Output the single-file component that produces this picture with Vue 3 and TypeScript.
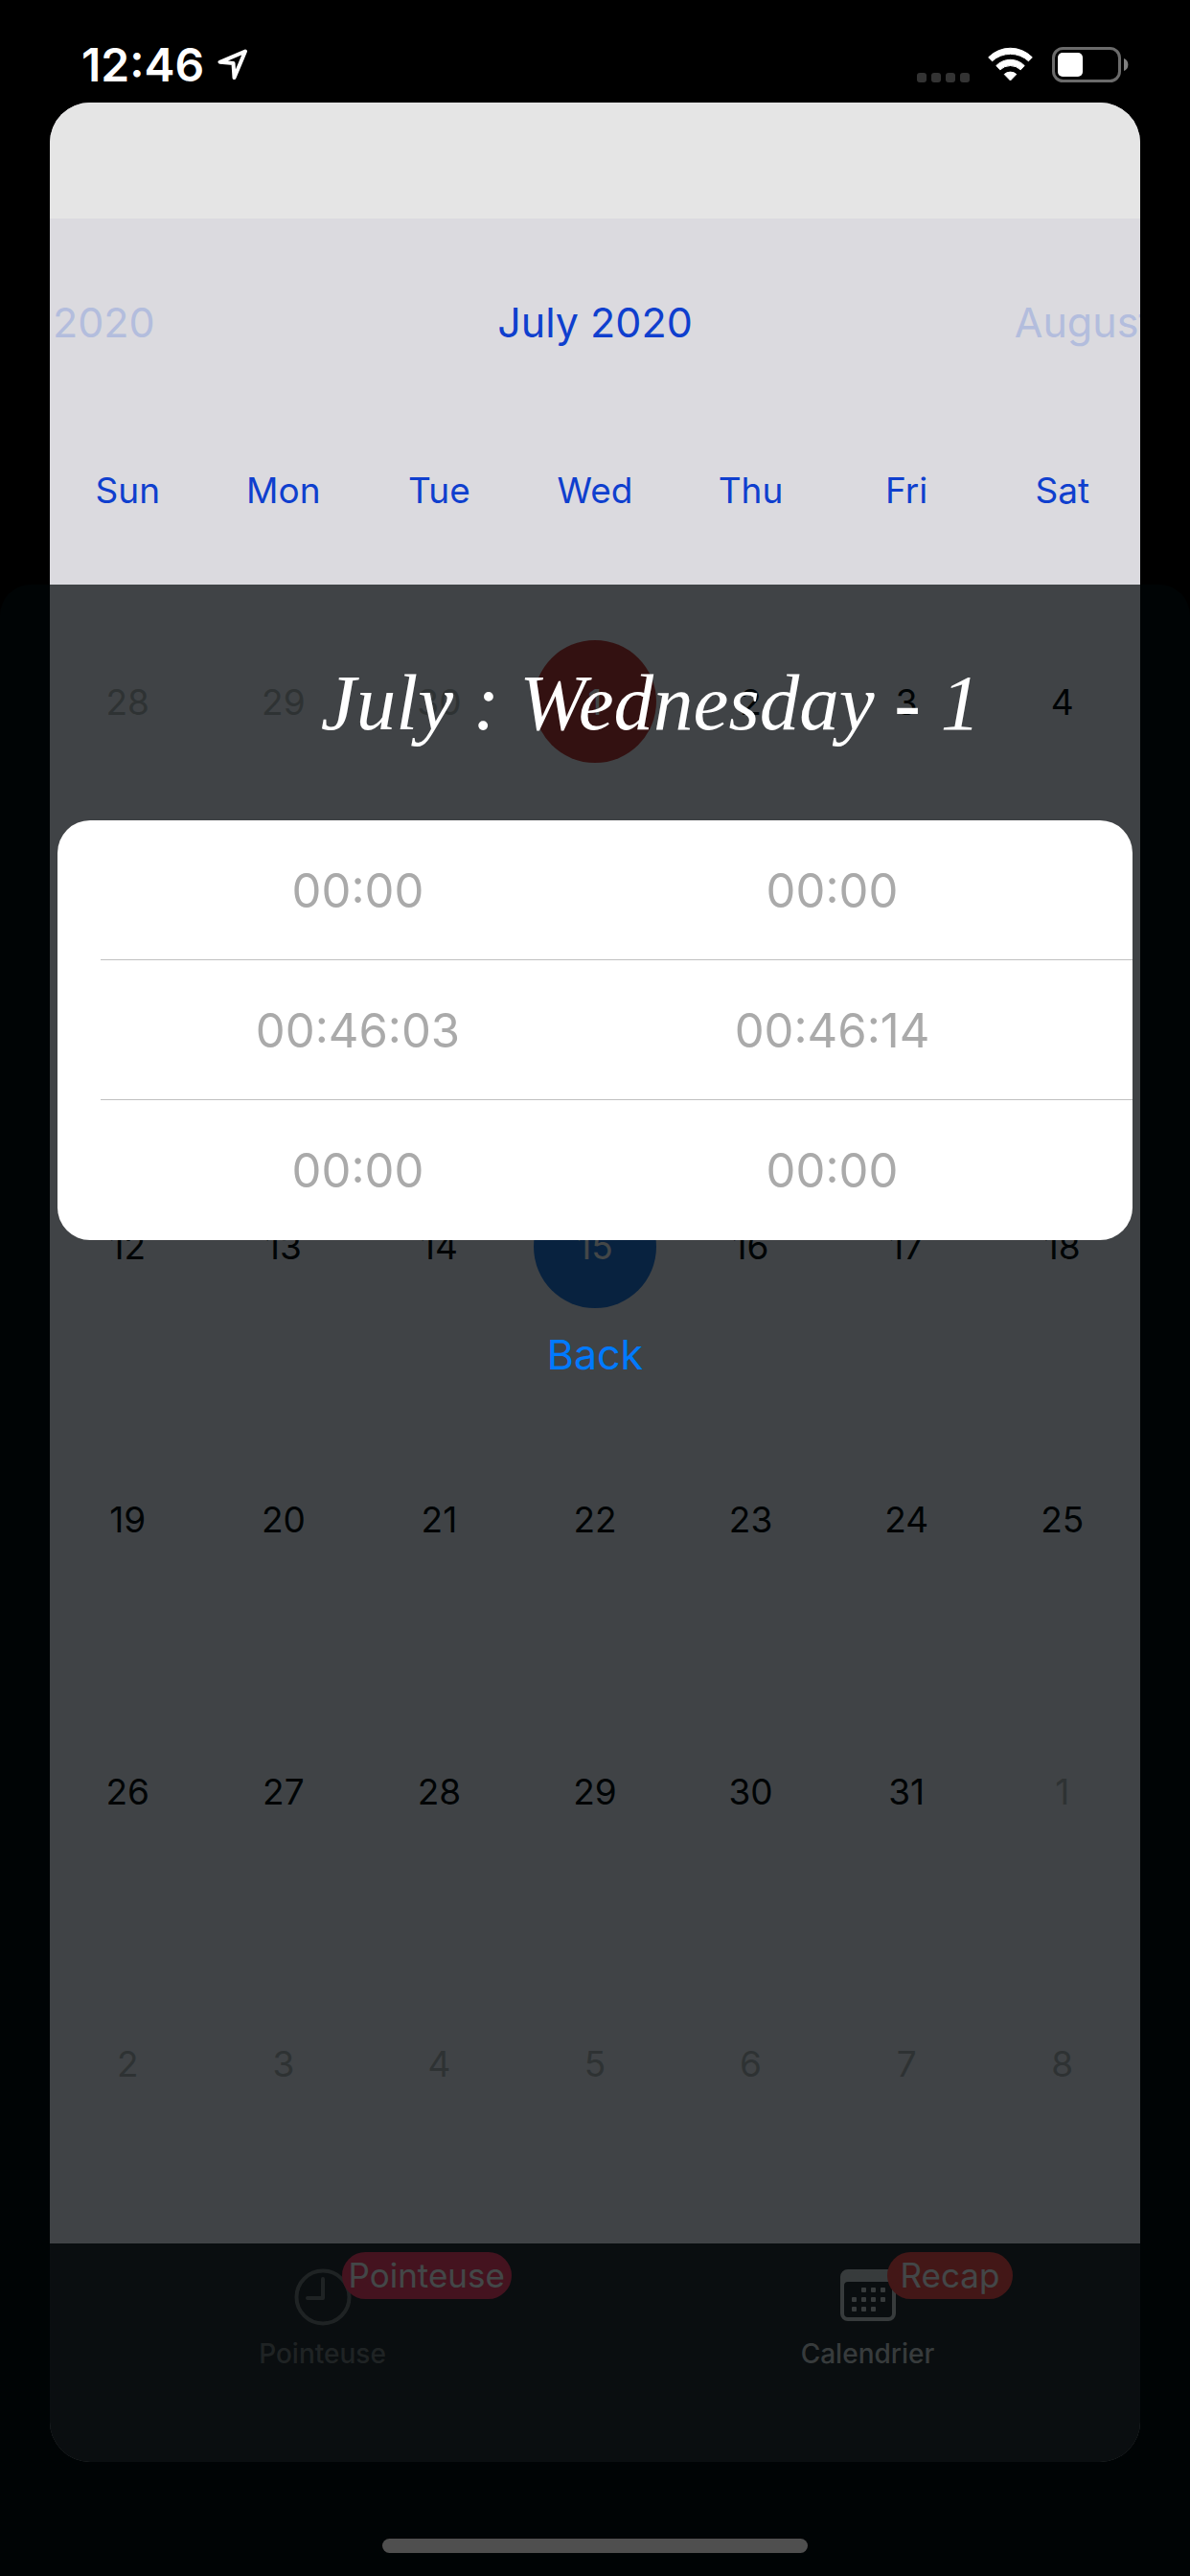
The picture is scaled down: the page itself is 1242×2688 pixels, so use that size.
<script setup lang="ts">
interface Day {
  label: number
  outside?: boolean
  mark?: 'selected' | 'today'
}

interface Tab {
  label: string
  badge: string
  icon: 'clock' | 'calendar'
  active: boolean
}

const months: string[] = ['June 2020', 'July 2020', 'August 2020']
const weekdays: string[] = ['Sun', 'Mon', 'Tue', 'Wed', 'Thu', 'Fri', 'Sat']

const FIRST_OFFSET = 3
const DAYS_BEFORE = 30
const DAYS_IN_MONTH = 31

const weeks: Day[][] = Array.from({ length: 6 }, (_, w) =>
  Array.from({ length: 7 }, (_, d): Day => {
    const n = w * 7 + d - FIRST_OFFSET + 1
    if (n < 1) return { label: DAYS_BEFORE + n, outside: true }
    if (n > DAYS_IN_MONTH) return { label: n - DAYS_IN_MONTH, outside: true }
    return { label: n, mark: n === 1 ? 'selected' : n === 15 ? 'today' : undefined }
  }),
)

const records: [string, string][] = [
  ['00:00', '00:00'],
  ['00:46:03', '00:46:14'],
  ['00:00', '00:00'],
]

const tabs: Tab[] = [
  { label: 'Pointeuse', badge: 'Pointeuse', icon: 'clock', active: false },
  { label: 'Calendrier', badge: 'Recap', icon: 'calendar', active: true },
]

const dots: [number, number][] = [
  [24, 22], [34, 22], [44, 22],
  [14, 32], [24, 32], [34, 32], [44, 32],
  [14, 42], [24, 42], [34, 42],
]
</script>

<template>
  <div class="screen">
    <header class="status">
      <div class="now">
        <time>12:46</time>
        <svg width="32" height="34" viewBox="0 0 32 34" aria-hidden="true">
          <path d="M29 2.5 L2.5 13.8 L16.5 15 L17.5 30 Z" fill="none" stroke="#fff" stroke-width="4" stroke-linejoin="round" />
        </svg>
      </div>
      <div class="signals">
        <svg width="55" height="10" viewBox="0 0 55 10" aria-hidden="true">
          <rect v-for="i in 4" :key="i" :x="(i - 1) * 15" y="0" width="10" height="10" rx="3" fill="#333" />
        </svg>
        <svg width="48" height="37" viewBox="0 0 48 37" fill="#fff" stroke="#fff" stroke-width="1" stroke-linejoin="round" aria-hidden="true">
          <path d="M.7 10.8 A32 32 0 0 1 46.3 10.8 L42.5 14.8 A28 28 0 0 0 4.5 14.8 Z" />
          <path d="M8.8 19.5 A20.5 20.5 0 0 1 38.2 19.5 L34.2 23.8 A15.5 15.5 0 0 0 12.8 23.8 Z" />
          <path d="M17.2 28.5 A9.5 9.5 0 0 1 29.8 28.5 L23.5 35 Z" />
        </svg>
        <svg width="80" height="37" viewBox="0 0 80 37" aria-hidden="true">
          <rect x="1.5" y="1.5" width="69" height="34" rx="10" fill="none" stroke="#6b6b6b" stroke-width="3" />
          <rect x="6" y="6" width="26" height="25" rx="5" fill="#fff" />
          <path d="M75 12 A7 7 0 0 1 75 25 Z" fill="#808080" />
        </svg>
      </div>
    </header>

    <main class="app">
      <div class="nav-space"></div>
      <div class="calendar">
        <div class="months">
          <button v-for="(m, i) in months" :key="m" type="button" class="month" :class="{ current: i === 1 }">{{ m }}</button>
        </div>
        <table class="grid">
          <thead>
            <tr>
              <th v-for="w in weekdays" :key="w" scope="col">{{ w }}</th>
            </tr>
          </thead>
          <tbody>
            <tr v-for="(week, wi) in weeks" :key="wi">
              <td v-for="(day, di) in week" :key="di">
                <button type="button" class="day" :class="[day.mark, { outside: day.outside }]">{{ day.label }}</button>
              </td>
            </tr>
          </tbody>
        </table>
      </div>

      <nav class="tabs">
        <a v-for="tab in tabs" :key="tab.label" href="#" class="tab" :class="{ active: tab.active }">
          <svg v-if="tab.icon === 'clock'" width="60" height="60" viewBox="0 0 60 60" fill="none" stroke="currentColor" stroke-linecap="round" stroke-linejoin="round" aria-hidden="true">
            <circle cx="30" cy="30" r="27.5" stroke-width="4" />
            <path d="M30 11 V31 H14" stroke-width="4" />
          </svg>
          <svg v-else width="60" height="60" viewBox="0 0 60 60" fill="currentColor" aria-hidden="true">
            <path fill-rule="evenodd" d="M9 1 H51 A8 8 0 0 1 59 9 V47 A8 8 0 0 1 51 55 H9 A8 8 0 0 1 1 47 V9 A8 8 0 0 1 9 1 Z M9 14 A4 4 0 0 0 5 18 V47 A4 4 0 0 0 9 51 H51 A4 4 0 0 0 55 47 V18 A4 4 0 0 0 51 14 Z" />
            <rect v-for="([x, y], i) in dots" :key="i" :x="x - 1" :y="y - 2" width="5" height="5" rx="1" />
          </svg>
          <span class="tab-label">{{ tab.label }}</span>
          <span class="badge" :class="{ recap: tab.active }">{{ tab.badge }}</span>
        </a>
      </nav>
    </main>

    <section class="sheet" aria-label="Day details">
      <h1 class="title">July : Wednesday - 1</h1>
      <ul class="records">
        <li v-for="([start, end], i) in records" :key="i">
          <div class="record">
            <span>{{ start }}</span>
            <span>{{ end }}</span>
          </div>
        </li>
      </ul>
      <button type="button" class="back">Back</button>
      <div class="home"></div>
    </section>
  </div>
</template>

<style>
html,
body {
  margin: 0;
  background: #000;
}
</style>

<style scoped>
* {
  box-sizing: border-box;
}

.screen {
  position: relative;
  display: flex;
  flex-direction: column;
  min-height: 100vh;
  overflow: hidden;
  font-family: Inter, "Liberation Sans", sans-serif;
  background: #000;
}

button {
  margin: 0;
  padding: 0;
  border: 0;
  background: none;
  font: inherit;
  color: inherit;
}

.status {
  display: flex;
  justify-content: space-between;
  align-items: flex-start;
  height: 107px;
  padding: 49px 64px 0 85px;
  color: #fff;
}

.now {
  display: flex;
  align-items: center;
  gap: 14px;
  height: 38px;
  font-size: 48px;
  font-weight: 600;
  line-height: 38px;
}

.signals {
  display: flex;
  align-items: flex-end;
  gap: 19px;
}

.app {
  flex: 1;
  display: flex;
  flex-direction: column;
  margin: 0 52px 119px;
  border-radius: 42px;
  overflow: hidden;
  background: #dbdadf;
}

.nav-space {
  height: 121px;
  background: #e5e5e5;
}

.calendar {
  flex: 1;
  display: flex;
  flex-direction: column;
  padding-bottom: 45px;
}

.months {
  display: flex;
  justify-content: center;
  height: 216px;
  overflow: hidden;
  font-size: 43px;
  color: #b3bddd;
}

.month {
  flex: 0 0 50%;
  text-align: center;
  white-space: nowrap;
}

.month.current {
  color: #0f3fce;
}

.grid {
  flex: 1;
  display: flex;
  flex-direction: column;
  gap: 10px;
  font-size: 37px;
}

.grid tr {
  display: grid;
  grid-template-columns: repeat(7, 1fr);
}

.grid th {
  padding: 0;
  font-weight: 400;
  line-height: 136px;
  color: #0f3fce;
}

.grid tbody {
  flex: 1;
  display: grid;
  grid-template-rows: repeat(6, minmax(140px, 1fr));
}

.grid td {
  display: flex;
  align-items: center;
  justify-content: center;
  padding: 0;
}

.day {
  width: 128px;
  height: 128px;
  border-radius: 50%;
  color: #000;
}

.day.outside {
  color: #a0a0a0;
}

.day.selected {
  background: #b12d2a;
  color: #e5e5e5;
}

.day.today {
  background: #1c68c9;
  color: #e5e5e5;
}

.tabs {
  display: flex;
  height: 228px;
  background: #232326;
}

.tab {
  position: relative;
  flex: 1;
  display: flex;
  flex-direction: column;
  align-items: center;
  gap: 12px;
  padding-top: 26px;
  color: #6c6c6c;
  text-decoration: none;
}

.tab.active {
  color: #bfbfbf;
}

.tab-label {
  font-size: 28px;
  font-weight: 500;
  line-height: 34px;
}

.badge {
  position: absolute;
  top: 9px;
  left: calc(50% + 20px);
  padding: 0 7px;
  border-radius: 25px;
  font-size: 35px;
  line-height: 49px;
  color: #e5e5e5;
  background: #e9345a;
}

.badge.recap {
  padding: 0 14px;
  background: #e5423e;
}

.sheet {
  position: absolute;
  inset: 610px 0 0;
  display: flex;
  flex-direction: column;
  align-items: center;
  border-radius: 32px 32px 0 0;
  background: rgb(0 6 7 / 71%);
}

.title {
  display: flex;
  align-items: center;
  height: 246px;
  margin: 0;
  padding-left: 116px;
  font-family: "Snell Roundhand", "Liberation Serif", serif;
  font-size: 83px;
  font-style: italic;
  font-weight: 400;
  white-space: nowrap;
  color: #fff;
}

.records {
  align-self: stretch;
  margin: 0 60px;
  padding: 0;
  list-style: none;
  border-radius: 34px;
  background: #fff;
}

.records li {
  padding-left: 45px;
}

.record {
  display: flex;
  padding: 3px 66px 0 21px;
  border-bottom: 1px solid #c0c0c0;
  font-size: 49px;
  line-height: 142px;
  color: #aaa;
}

.records li:last-child .record {
  border-bottom-color: transparent;
}

.record span {
  flex: 1;
  text-align: center;
}

.back {
  margin-top: 84px;
  font-size: 43px;
  line-height: 70px;
  color: #007aff;
}

.home {
  width: 444px;
  height: 15px;
  margin: auto 0 24px;
  border-radius: 8px;
  background: #4f4f4f;
}
</style>
